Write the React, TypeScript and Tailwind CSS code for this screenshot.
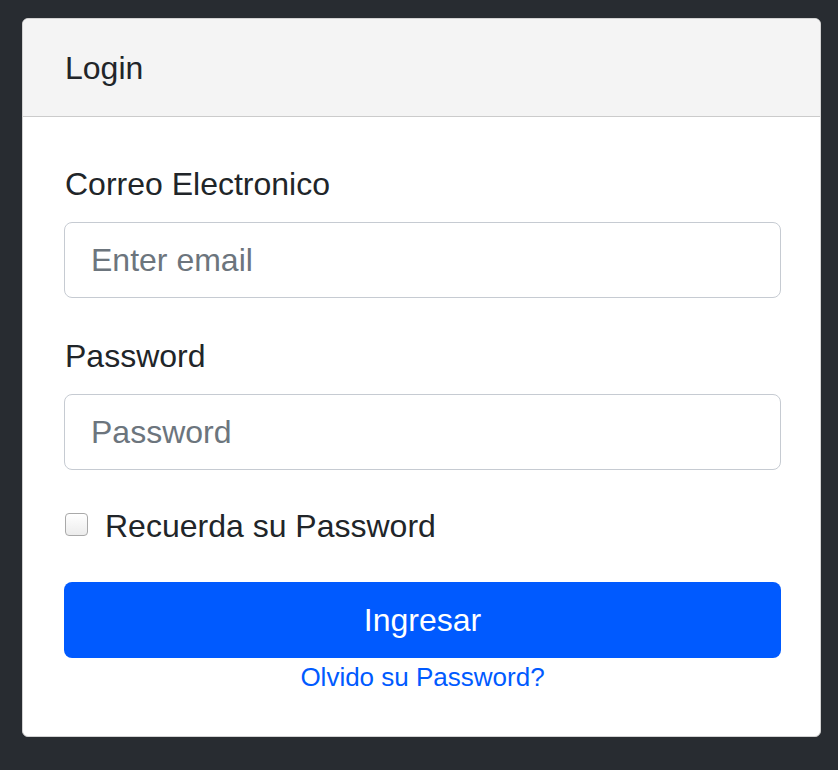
export default function App() {
  return (
    <div
      className="min-h-screen bg-[#282c31] pl-[22px] pt-[18px]"
      style={{ fontFamily: '"Liberation Sans", Arial, sans-serif' }}
    >
      <div className="w-[799px] overflow-hidden rounded-[6px] border border-[#d2d2d2] bg-white">
        <div className="h-[98px] border-b border-[#cbcbcb] bg-[#f4f4f4] px-[42px] pt-[25px]">
          <h1 className="text-[32px] leading-[48px] text-[#212529]">Login</h1>
        </div>

        <form className="pb-[39px] pl-[41px] pr-[39px] pt-[43px]" onSubmit={(e) => e.preventDefault()}>
          <div className="mb-[34px]">
            <label className="mb-[14px] block pl-[1px] text-[32px] leading-[48px] text-[#212529]">
              Correo Electronico
            </label>
            <input
              type="email"
              placeholder="Enter email"
              className="block h-[76px] w-full rounded-[8px] border border-[#c6cbd2] px-[26px] text-[32px] text-[#495057] outline-none placeholder:text-[#6c757d]"
            />
          </div>

          <div className="mb-[32px]">
            <label className="mb-[14px] block pl-[1px] text-[32px] leading-[48px] text-[#212529]">
              Password
            </label>
            <input
              type="password"
              placeholder="Password"
              className="block h-[76px] w-full rounded-[8px] border border-[#c6cbd2] px-[26px] text-[32px] text-[#495057] outline-none placeholder:text-[#6c757d]"
            />
          </div>

          <div className="mb-[32px] flex h-[48px] items-center">
            <span className="ml-[1px] mt-[-4px] h-[23px] w-[23px] shrink-0 rounded-[4px] border border-[#a9a9a9] bg-gradient-to-b from-white to-[#ececec]" />
            <span className="ml-[17px] text-[32px] leading-[48px] text-[#212529]">
              Recuerda su Password
            </span>
          </div>

          <button
            type="submit"
            className="block h-[76px] w-full rounded-[8px] bg-[#005aff] text-center text-[32px] text-white"
          >
            Ingresar
          </button>

          <div className="text-center text-[26px] leading-[39px]">
            <a href="#" className="text-[#005aff]">
              Olvido su Password?
            </a>
          </div>
        </form>
      </div>
    </div>
  );
}
